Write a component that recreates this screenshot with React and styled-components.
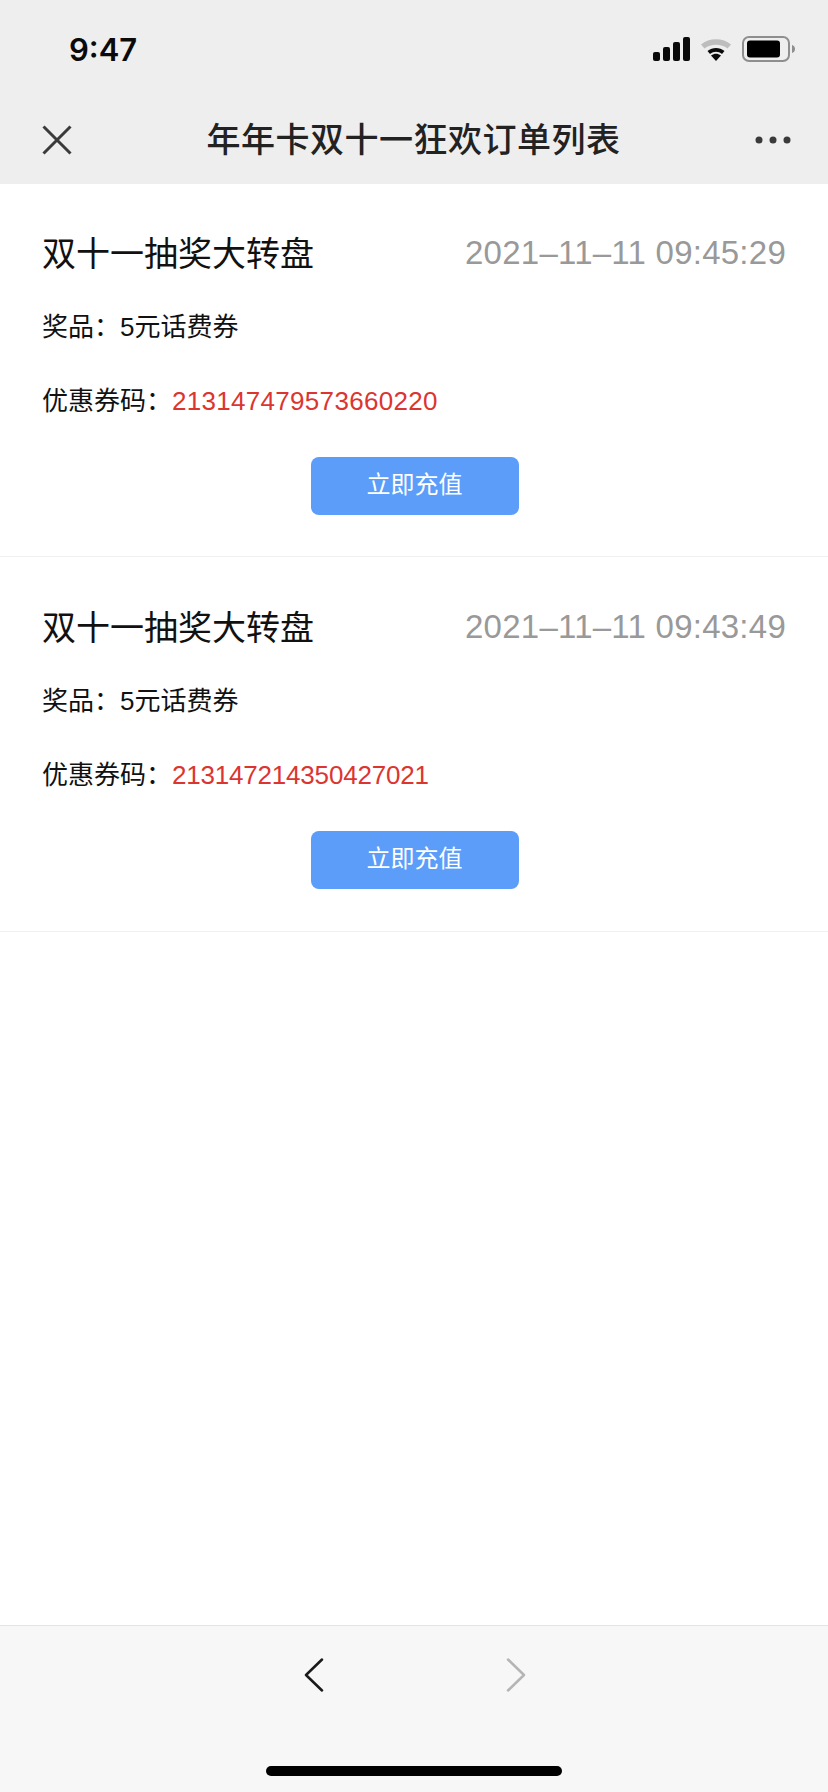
import React from 'react';
import styled, { createGlobalStyle } from 'styled-components';

const GlobalStyle = createGlobalStyle`
  html, body {
    margin: 0;
    padding: 0;
    background: #fff;
  }
  body {
    font-family: "Liberation Sans", "Noto Sans CJK SC", sans-serif;
  }
`;

const Page = styled.div`
  width: 828px;
  height: 1792px;
  display: flex;
  flex-direction: column;
  overflow: hidden;
`;

const Header = styled.header`
  height: 184px;
  background: #eeeeee;
  display: flex;
  flex-direction: column;
`;

const StatusBar = styled.div`
  height: 92px;
  display: flex;
  align-items: center;
  justify-content: space-between;
  padding: 0 32px 0 69px;
  box-sizing: border-box;
`;

const Clock = styled.div`
  font-family: Inter, "Liberation Sans", sans-serif;
  font-size: 31px;
  font-weight: 600;
  color: #0a0a0a;
  margin-top: 6px;
`;

const StatusIcons = styled.div`
  display: flex;
  align-items: center;
  gap: 10px;
  margin-top: 6px;
`;

const NavBar = styled.nav`
  height: 92px;
  display: flex;
  align-items: center;
  justify-content: space-between;
  padding: 3px 37px 0 42px;
  box-sizing: border-box;
`;

const NavTitle = styled.div`
  font-size: 34px;
  letter-spacing: 0.5px;
  color: #222;
  font-weight: 500;
  margin-bottom: 5px;
`;

const List = styled.main`
  flex: 1;
  background: #fff;
`;

const Order = styled.section`
  padding: 33px 42px 41px;
  border-bottom: 1px solid #f0f0f0;

  & + & {
    padding-top: 34px;
    padding-bottom: 42px;
  }
`;

const OrderHead = styled.div`
  height: 73px;
  display: flex;
  align-items: center;
  justify-content: space-between;
`;

const OrderName = styled.div`
  font-size: 34px;
  color: #111;
  margin-bottom: 5px;
`;

const OrderTime = styled.div`
  font-size: 33px;
  letter-spacing: 0.25px;
  color: #999999;
  margin-bottom: 1px;
`;

const InfoRow = styled.div`
  height: 74px;
  line-height: 74px;
  font-size: 26px;
  color: #111;
`;

const Code = styled.span`
  color: #dc3530;
  letter-spacing: ${(p) => p.$tracking}px;
`;

const ButtonRow = styled.div`
  display: flex;
  justify-content: center;
  margin-top: 19px;
  padding-left: 1px;
`;

const RechargeButton = styled.button`
  width: 208px;
  height: 58px;
  border: 0;
  padding: 0 0 8px;
  border-radius: 8px;
  background: #5b9df9;
  color: #fff;
  font-family: inherit;
  font-size: 24px;
`;

const Footer = styled.footer`
  height: 167px;
  box-sizing: border-box;
  background: #f7f7f7;
  border-top: 1px solid #e4e4e4;
  display: flex;
  flex-direction: column;
  align-items: center;
`;

const Arrows = styled.div`
  display: flex;
  gap: 182px;
  margin-top: 32px;
  padding-left: 2px;
`;

const HomeIndicator = styled.div`
  width: 296px;
  height: 10px;
  border-radius: 5px;
  background: #000;
  margin-top: 74px;
`;

const SignalIcon = () => (
  <svg width="37" height="24" viewBox="0 0 37 24">
    <rect x="0" y="15" width="7" height="9" rx="2" fill="#0a0a0a" />
    <rect x="10" y="10" width="7" height="14" rx="2" fill="#0a0a0a" />
    <rect x="20" y="5" width="7" height="19" rx="2" fill="#0a0a0a" />
    <rect x="30" y="0" width="7" height="24" rx="2" fill="#0a0a0a" />
  </svg>
);

const WifiIcon = () => (
  <svg width="32" height="24" viewBox="0 0 32 24" fill="none">
    <path d="M1 7.500 C9 0.500 23 0.500 31 7.500 L27.500 11.500 C21 6.500 11 6.500 4.500 11.500 Z" fill="#bdbdbd" />
    <path d="M7.500 14 C12.500 10 19.500 10 24.500 14 L22 17 C18 14 14 14 10 17 Z" fill="#0a0a0a" />
    <path d="M11 18.500 C14.500 16 17.500 16 21 18.500 L16 24 Z" fill="#0a0a0a" />
  </svg>
);

const BatteryIcon = () => (
  <svg width="54" height="26" viewBox="0 0 54 26" fill="none">
    <rect x="1" y="1" width="46" height="24" rx="6" stroke="#8e8e8e" strokeWidth="2" />
    <rect x="5" y="4.500" width="33" height="17" rx="3" fill="#000" />
    <path d="M50 9 C52.500 10 53 11.500 53 13 C53 14.500 52.500 16 50 17 Z" fill="#8e8e8e" />
  </svg>
);

const CloseIcon = () => (
  <svg width="30" height="30" viewBox="0 0 30 30" fill="none">
    <path d="M1.500 1.500 L28.500 28.500 M28.500 1.500 L1.500 28.500" stroke="#3a3a3a" strokeWidth="3" />
  </svg>
);

const MoreIcon = () => (
  <svg width="36" height="8" viewBox="0 0 36 8">
    <circle cx="4" cy="4" r="3.500" fill="#3a3a3a" />
    <circle cx="18" cy="4" r="3.500" fill="#3a3a3a" />
    <circle cx="32" cy="4" r="3.500" fill="#3a3a3a" />
  </svg>
);

const Chevron = ({ left, color }) => (
  <svg width="20" height="34" viewBox="0 0 20 34" fill="none">
    <path
      d={left ? 'M18 1.500 L2 17 L18 32.500' : 'M2 1.500 L18 17 L2 32.500'}
      stroke={color}
      strokeWidth="2.500"
      strokeLinecap="round"
      strokeLinejoin="round"
    />
  </svg>
);

const orders = [
  { time: '2021–11–11 09:45:29', code: '213147479573660220', tracking: 0.3 },
  { time: '2021–11–11 09:43:49', code: '213147214350427021', tracking: -0.2 },
];

export default function App() {
  return (
    <>
      <GlobalStyle />
      <Page>
        <Header>
          <StatusBar>
            <Clock>9:47</Clock>
            <StatusIcons>
              <SignalIcon />
              <WifiIcon />
              <BatteryIcon />
            </StatusIcons>
          </StatusBar>
          <NavBar>
            <CloseIcon />
            <NavTitle>年年卡双十一狂欢订单列表</NavTitle>
            <MoreIcon />
          </NavBar>
        </Header>
        <List>
          {orders.map((order) => (
            <Order key={order.code}>
              <OrderHead>
                <OrderName>双十一抽奖大转盘</OrderName>
                <OrderTime>{order.time}</OrderTime>
              </OrderHead>
              <InfoRow>奖品：5元话费券</InfoRow>
              <InfoRow>
                优惠券码：<Code $tracking={order.tracking}>{order.code}</Code>
              </InfoRow>
              <ButtonRow>
                <RechargeButton>立即充值</RechargeButton>
              </ButtonRow>
            </Order>
          ))}
        </List>
        <Footer>
          <Arrows>
            <Chevron left color="#1a1a1a" />
            <Chevron color="#b5b5b5" />
          </Arrows>
          <HomeIndicator />
        </Footer>
      </Page>
    </>
  );
}
